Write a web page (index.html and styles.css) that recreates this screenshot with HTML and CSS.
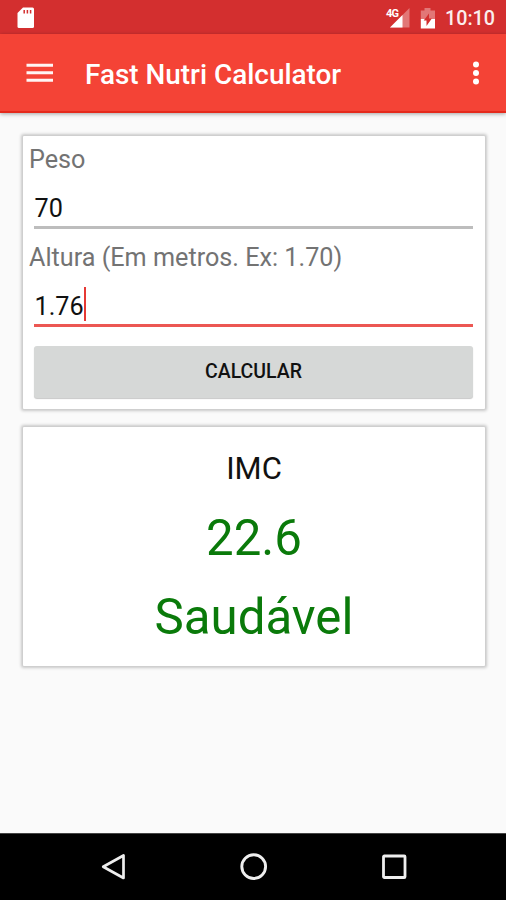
FILE: index.html
```html
<!DOCTYPE html>
<html lang="pt">
<head>
<meta charset="utf-8">
<title>Fast Nutri Calculator</title>
<link rel="stylesheet" href="styles.css">
</head>
<body>
<div class="screen">
  <div class="status">
    <svg class="sd" width="18" height="22" viewBox="0 0 18 22"><path fill="#fff" d="M6 .5h9.500a1.500 1.500 0 0 1 1.500 1.500v17.500a1.500 1.500 0 0 1-1.500 1.500h-13.500a1.500 1.500 0 0 1-1.500-1.500V6z"/><path stroke="#d32f2f" stroke-width="1.500" d="M7.200 3v3.500M10.400 3v3.500M13.600 3v3.500"/></svg>
    <div class="signal">
      <svg width="20" height="20" viewBox="0 0 20 20"><path fill="#fff" fill-opacity=".35" d="M19.500 0v19.500H0z"/><path fill="#fff" d="M12.500 7v12.500H0z"/></svg>
      <span class="net">4G</span>
    </div>
    <svg class="battery" width="16" height="22" viewBox="0 0 16 22"><path fill="#fff" fill-opacity=".35" d="M4.500 0h6v2.500H15V11H.8V2.500h3.700z"/><path fill="#fff" d="M.8 11H15v9.500H.8z"/><path fill="#d32f2f" d="M9 5.500v5h2.800L6.500 18v-5.500H3.700z"/></svg>
    <span class="clock">10:10</span>
  </div>
  <header class="bar">
    <svg class="menu" width="28" height="22" viewBox="0 0 28 22"><path stroke="#fff" stroke-opacity=".95" stroke-width="3" d="M.5 3.300h26.500M.5 10.700h26.500M.5 18.300h26.500"/></svg>
    <h1 class="title">Fast Nutri Calculator</h1>
    <svg class="more" width="8" height="26" viewBox="0 0 8 26"><g fill="#fff"><circle cx="4" cy="4.500" r="3"/><circle cx="4" cy="13" r="3"/><circle cx="4" cy="21.500" r="3"/></g></svg>
  </header>
  <main class="content">
    <section class="card form">
      <div class="label">Peso</div>
      <div class="field"><span class="value">70</span></div>
      <div class="label">Altura (Em metros. Ex: 1.70)</div>
      <div class="field active"><span class="value">1.76</span><i class="caret"></i></div>
      <button class="button">CALCULAR</button>
    </section>
    <section class="card result">
      <div class="name">IMC</div>
      <div class="number">22.6</div>
      <div class="verdict">Saudável</div>
    </section>
  </main>
  <nav class="nav">
    <svg width="28" height="30" viewBox="0 0 28 30"><path fill="none" stroke="#eee" stroke-width="2.700" stroke-linejoin="round" d="M23.500 3.500v22.500L3.200 14.700z"/></svg>
    <svg width="30" height="30" viewBox="0 0 30 30"><circle cx="14.700" cy="14.600" r="11.900" fill="none" stroke="#eee" stroke-width="2.900"/></svg>
    <svg width="28" height="30" viewBox="0 0 28 30"><rect x="3.500" y="4" width="21.500" height="21.500" rx=".8" fill="none" stroke="#eee" stroke-width="2.800"/></svg>
  </nav>
</div>
</body>
</html>
```
FILE: styles.css
```css
* { box-sizing: border-box; }
body { margin: 0; font-family: Roboto, sans-serif; }
.screen { width: 506px; height: 900px; display: flex; flex-direction: column; background: #fafafa; overflow: hidden; }
.status { height: 34px; flex: none; display: flex; align-items: center; background: #d32f2f; padding: 0 11px 0 17px; }
.sd { margin: 1px auto 0 0; }
.signal { position: relative; width: 20px; height: 20px; margin: 2px 10px 0 0; }
.signal svg { display: block; }
.net { position: absolute; left: -4px; top: 0; color: #fff; font-size: 11px; line-height: 11px; font-weight: 700; letter-spacing: -.8px; }
.battery { margin: 3px 9px 0 0; }
.clock { color: #fff; opacity: .92; font-size: 19.700px; line-height: 34px; font-weight: 500; margin-top: 4px; }
.bar { height: 79px; flex: none; display: flex; align-items: center; background: #f44336; border-bottom: 2px solid #e52a1c; padding: 0 26px; box-shadow: 0 1px 4px rgba(0, 0, 0, .35); z-index: 1; }
.menu { margin-top: 1px; }
.title { margin: 5px auto 0 31px; color: #fff; font-size: 27.900px; line-height: 40px; font-weight: 500; white-space: nowrap; }
.more { margin-top: 1px; }
.content { flex: 1; padding: 23px 21px 0 23px; display: flex; flex-direction: column; gap: 18px; }
.card { background: #fff; border-radius: 1px; box-shadow: 0 0 3px 2px #c8c8c8; }
.form { height: 273px; display: flex; flex-direction: column; padding-top: 1px; }
.label { height: 46px; line-height: 46px; padding-left: 6px; font-size: 25.200px; color: #737373; white-space: nowrap; }
.field { height: 46px; margin: 0 12px 6px 11px; padding-left: 1px; border-bottom: 3px solid #bdbdbd; display: flex; align-items: flex-start; font-size: 25.200px; line-height: 52px; color: #111; }
.active { border-bottom-color: #ec5753; }
.value { margin-left: -.5px; }
.caret { width: 2px; height: 34px; margin-top: 6px; background: #e53935; }
.button { margin: 13px 12px 0 11px; height: 52px; padding: 0; border: 0; border-radius: 3px; background: #d6d8d7; box-shadow: 0 1px 1px #c8c8c8; font: 500 19.500px/52px Roboto, sans-serif; color: #111; }
.result { height: 239px; text-align: center; padding-top: 16px; }
.name { font-size: 31px; line-height: 52px; margin-bottom: 4px; color: #111; }
.number, .verdict { font-size: 49.200px; line-height: 79px; color: #0a7a0a; }
.nav { height: 67px; flex: none; background: #000; border-top: 1px solid #444; display: flex; justify-content: space-between; align-items: center; padding: 0 98px 0 100px; }
```
